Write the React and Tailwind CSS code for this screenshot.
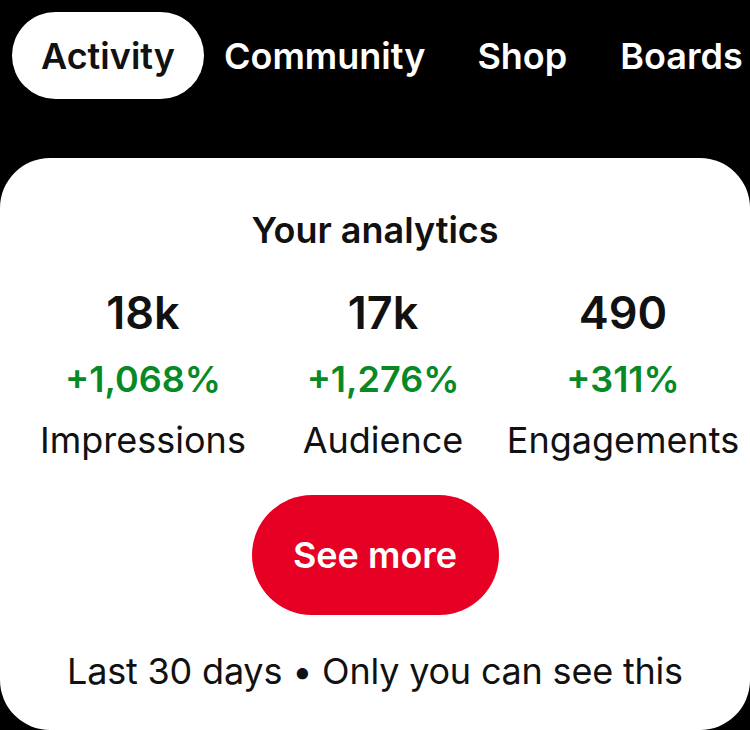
export default function App() {
  const stats = [
    { value: "18k", delta: "+1,068%", label: "Impressions" },
    { value: "17k", delta: "+1,276%", label: "Audience" },
    { value: "490", delta: "+311%", label: "Engagements" },
  ];
  return (
    <div className="w-[750px] h-[730px] bg-black overflow-hidden" style={{ fontFamily: 'Inter, "Noto Sans", sans-serif' }}>
      <div className="flex items-center pt-[12px] pl-[12px] whitespace-nowrap text-[36px] font-semibold">
        <div className="h-[87px] px-[29px] rounded-full bg-white text-[#111111] flex items-center">Activity</div>
        <div className="ml-[20px] text-white">Community</div>
        <div className="ml-[52px] text-white">Shop</div>
        <div className="ml-[53px] text-white">Boards</div>
      </div>
      <div className="mt-[59px] h-[572px] bg-white rounded-[50px] flex flex-col items-center pt-[52px] text-[#111111]">
        <div className="h-[40px] leading-[40px] text-[36px] font-semibold">Your analytics</div>
        <div className="mt-[39px] w-full pl-[23px] pr-[7px] grid grid-cols-3">
          {stats.map((s) => (
            <div key={s.label} className="flex flex-col items-center">
              <div className="h-[48px] leading-[48px] text-[45px] font-semibold">{s.value}</div>
              <div className="mt-[22px] h-[40px] leading-[40px] text-[36px] font-semibold text-[#078a25]">{s.delta}</div>
              <div className="mt-[21px] h-[40px] leading-[40px] text-[36px] whitespace-nowrap">{s.label}</div>
            </div>
          ))}
        </div>
        <div className="mt-[35px] h-[120px] w-[247px] rounded-full bg-[#e60023] text-white text-[36px] font-semibold flex items-center justify-center">See more</div>
        <div className="mt-[36px] h-[40px] leading-[40px] text-[36px] tracking-[-0.2px] whitespace-nowrap">Last 30 days • Only you can see this</div>
      </div>
    </div>
  );
}
